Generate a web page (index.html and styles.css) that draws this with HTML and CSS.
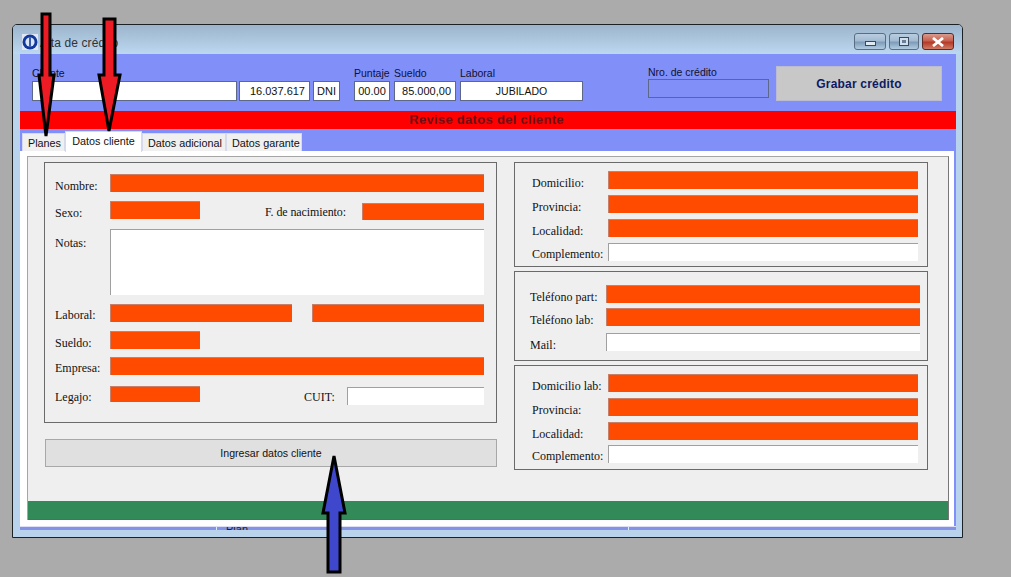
FILE: index.html
```html
<!DOCTYPE html>
<html lang="es">
<head>
<meta charset="utf-8">
<title>Alta de crédito</title>
<link rel="stylesheet" href="styles.css">
</head>
<body>
<div class="window">
  <div class="titlebar">
    <svg class="app-icon" viewBox="0 0 16 16" width="16" height="16">
      <rect width="16" height="16" fill="#dfe8f2"/>
      <circle cx="8" cy="8" r="7.5" fill="#12389e"/>
      <circle cx="8" cy="8" r="4.6" fill="#d9e6f5"/>
      <rect x="7.2" y="3.5" width="1.6" height="9" fill="#12389e"/>
    </svg>
    <span class="title-text">Alta de crédito</span>
    <div class="controls">
      <div class="ctl"><span class="ico-min"></span></div>
      <div class="ctl ctl-max"><span class="ico-max"></span></div>
      <div class="ctl ctl-close">
        <svg viewBox="0 0 14 10" width="14" height="10"><path d="M2 1l10 8M12 1L2 9" stroke="#fff" stroke-width="2.8" fill="none"/></svg>
      </div>
    </div>
  </div>
  <div class="client">
    <div class="head">
      <div class="group"><label class="cap">Cliente</label><div class="box w-cliente"></div></div>
      <div class="group"><div class="box w-dni tr">16.037.617</div></div>
      <div class="group"><div class="box w-tipo tc">DNI</div></div>
      <div class="group g-puntaje"><label class="cap">Puntaje</label><div class="box w-punt tc">00.00</div></div>
      <div class="group"><label class="cap">Sueldo</label><div class="box w-sueldo tr">85.000,00</div></div>
      <div class="group"><label class="cap">Laboral</label><div class="box w-lab tc">JUBILADO</div></div>
      <div class="group g-nro"><label class="cap">Nro. de crédito</label><div class="box box-empty w-nro"></div></div>
      <button class="save">Grabar crédito</button>
    </div>
    <div class="alert">Revise datos del cliente</div>
    <div class="tabs">
      <div class="tab">Planes</div>
      <div class="tab tab-on">Datos cliente</div>
      <div class="tab">Datos adicional</div>
      <div class="tab">Datos garante</div>
    </div>
    <div class="panel">
      <div class="sheet">
        <div class="main">
          <div class="col-left">
            <div class="fs fs-left">
              <div class="row"><span class="lb lb-n">Nombre:</span><div class="f f-grow"></div></div>
              <div class="row"><span class="lb lb-n">Sexo:</span><div class="f f-90"></div><span class="lb lb-nac">F. de nacimiento:</span><div class="f f-nac"></div></div>
              <div class="row"><span class="lb lb-n lb-notas">Notas:</span><div class="in in-notas"></div></div>
              <div class="row"><span class="lb lb-n lb-up">Laboral:</span><div class="f f-182"></div><div class="f f-172"></div></div>
              <div class="row"><span class="lb lb-n">Sueldo:</span><div class="f f-90"></div></div>
              <div class="row"><span class="lb lb-n lb-up">Empresa:</span><div class="f f-grow"></div></div>
              <div class="row"><span class="lb lb-n lb-up">Legajo:</span><div class="f f-90 f-short"></div><span class="lb lb-cuit lb-up">CUIT:</span><div class="in in-cuit"></div></div>
            </div>
            <button class="enter">Ingresar datos cliente</button>
          </div>
          <div class="col-right">
            <div class="fs fs-r fs-r1">
              <div class="row"><span class="lb lb-r">Domicilio:</span><div class="f f-grow"></div></div>
              <div class="row"><span class="lb lb-r">Provincia:</span><div class="f f-grow"></div></div>
              <div class="row"><span class="lb lb-r">Localidad:</span><div class="f f-grow"></div></div>
              <div class="row"><span class="lb lb-r lb-up">Complemento:</span><div class="in in-grow"></div></div>
            </div>
            <div class="fs fs-r fs-r2">
              <div class="row"><span class="lb lb-r">Teléfono part:</span><div class="f f-grow"></div></div>
              <div class="row"><span class="lb lb-r">Teléfono lab:</span><div class="f f-grow"></div></div>
              <div class="row"><span class="lb lb-r">Mail:</span><div class="in in-grow"></div></div>
            </div>
            <div class="fs fs-r fs-r3">
              <div class="row"><span class="lb lb-r">Domicilio lab:</span><div class="f f-grow"></div></div>
              <div class="row"><span class="lb lb-r">Provincia:</span><div class="f f-grow"></div></div>
              <div class="row"><span class="lb lb-r">Localidad:</span><div class="f f-grow"></div></div>
              <div class="row"><span class="lb lb-r lb-up">Complemento:</span><div class="in in-grow"></div></div>
            </div>
          </div>
        </div>
        <div class="greenbar"></div>
      </div>
    </div>
    <div class="strip">
      <div class="cell cell-a"></div>
      <div class="cell cell-b"><span class="cut">Plan</span></div>
      <div class="cell cell-c"></div>
    </div>
  </div>
</div>
<svg class="arrows" width="1011" height="577" viewBox="0 0 1011 577">
  <polygon class="a-red" points="42,14 50,14 50,75 54,75 46,136 39,75 42,75"/>
  <polygon class="a-red" points="104,19 115,19 115,75 120,75 109,131 99,75 104,75"/>
  <polygon class="a-blue" points="334,456 345,513 340,513 340,572 328,572 328,513 323,513"/>
</svg>
</body>
</html>
```

FILE: styles.css
```css
* { box-sizing: border-box; }
html, body { margin: 0; height: 100%; }
body {
  width: 1011px;
  height: 577px;
  overflow: hidden;
  background: #ababab;
  padding: 24px 0 0 12px;
  font-family: "Liberation Sans", Arial, sans-serif;
  position: relative;
}
.window {
  width: 951px;
  height: 514px;
  border: 1px solid #1c2224;
  border-radius: 5px 5px 0 0;
  background: #b9d3ec;
  padding: 0 6px 7px 7px;
  display: flex;
  flex-direction: column;
}
.titlebar {
  height: 29px;
  margin: 0 -6px 0 -7px;
  padding: 9px 8px 0 9px;
  background: linear-gradient(#9cb5cc, #bcd7f0);
  border-radius: 4px 4px 0 0;
  display: flex;
  align-items: flex-start;
}
.app-icon { flex: none; }
.title-text { margin: 2px 0 0 2px; font-size: 12px; line-height: 14px; color: #333; letter-spacing: .1px; }
.controls { margin-left: auto; display: flex; gap: 3px; margin-top: -1px; }
.ctl {
  width: 32px;
  height: 17px;
  border: 1px solid #5b6d80;
  border-radius: 3px;
  background: linear-gradient(#b9cde0 0, #a3bbd2 45%, #7d9cb9 55%, #b2cbe2 100%);
  display: flex;
  align-items: center;
  justify-content: center;
}
.ctl-max { width: 30px; }
.ctl-close {
  border-color: #5c2a22;
  background: linear-gradient(#d99b8f 0, #c8604e 45%, #b33a26 55%, #cf7a66 100%);
}
.ico-min { width: 11px; height: 5px; border: 1px solid #39485a; background: #dfeaf5; margin-top: 3px; }
.ico-max { width: 10px; height: 9px; border: 1px solid #39485a; box-shadow: inset 0 0 0 2px #cfdfee; background: #6a7f96; }
.client {
  height: 476px;
  background: #8090f8;
  display: flex;
  flex-direction: column;
}
.head {
  height: 57px;
  padding: 0 13px 10px 12px;
  display: flex;
  align-items: flex-end;
}
.group { display: flex; flex-direction: column; margin-right: 2px; }
.cap { font-size: 10.5px; line-height: 13px; margin-bottom: 1px; color: #101030; }
.box {
  height: 20px;
  background: #fff;
  border: 1px solid #5d6788;
  font-size: 11px;
  line-height: 19px;
  color: #111;
}
.tr { text-align: right; padding-right: 4px; }
.tc { text-align: center; }
.w-cliente { width: 205px; }
.w-dni { width: 71px; margin-right: 1px; }
.w-tipo { width: 27px; }
.g-puntaje { margin-left: 12px; margin-right: 4px; }
.w-punt { width: 36px; }
.w-sueldo { width: 62px; }
.group:nth-child(5) { margin-right: 4px; }
.w-lab { width: 123px; font-size: 10.5px; }
.g-nro { margin-left: 63px; margin-right: 7px; margin-bottom: 3px; }
.g-nro .cap { margin-bottom: 0; }
.box-empty { background: #8090f8; height: 19px; }
.w-nro { width: 121px; }
.save {
  width: 166px;
  height: 35px;
  padding: 0;
  border: 1px solid #bcbcd0;
  background: #c8c8c8;
  color: #0d1a63;
  font: bold 12px "Liberation Sans", Arial, sans-serif;
  letter-spacing: .2px;
}
.alert {
  height: 18px;
  background: #ff0000;
  color: #6e0f14;
  font-size: 13px;
  font-weight: bold;
  line-height: 18px;
  text-align: center;
  padding-right: 3px;
  letter-spacing: .3px;
}
.tabs {
  height: 22px;
  padding: 0 0 0 2px;
  display: flex;
  align-items: flex-end;
}
.tab {
  height: 18px;
  padding: 0 5px;
  background: #f0f0f0;
  border: 1px solid #d6daea;
  border-bottom: 0;
  font-size: 10.8px;
  line-height: 19px;
  color: #111;
  white-space: nowrap;
}
.tab:nth-child(1) { width: 43px; }
.tab:nth-child(3) { width: 84px; }
.tab:nth-child(4) { width: 76px; }
.tab-on {
  width: 77px;
  height: 21px;
  background: #fff;
  position: relative;
  top: 1px;
  text-align: center;
  padding: 0;
}
.panel {
  height: 375px;
  margin-right: 2px;
  background: #fff;
  padding: 5px 5px 6px 7px;
}
.sheet {
  height: 100%;
  background: #efefef;
  border-top: 1px solid #a5a5a5;
  border-left: 1px solid #a5a5a5;
  border-right: 1px solid #777;
  display: flex;
  flex-direction: column;
}
.main {
  flex: 1;
  display: flex;
  padding: 5px 0 0 16px;
  gap: 17px;
}
.col-left { width: 453px; display: flex; flex-direction: column; }
.col-right { width: 414px; display: flex; flex-direction: column; gap: 4px; }
.fs { border: 1px solid #6a6a6a; display: grid; }
.fs-left {
  height: 261px;
  padding: 11px 12px 0 10px;
  grid-template-rows: 27px 28px 75px 27px 26px 29px 19px;
}
.fs-r { padding-right: 9px; padding-left: 17px; }
.fs-r1 { height: 105px; padding-top: 8px; grid-template-rows: 24px 24px 24px 19px; }
.fs-r2 { height: 90px; padding: 13px 7px 0 15px; grid-template-rows: 23px 25px 19px; }
.fs-r3 { height: 105px; padding-top: 8px; grid-template-rows: 24px 24px 23px 19px; }
.row { display: flex; align-items: flex-start; min-width: 0; }
.lb {
  flex: none;
  font-family: "Liberation Serif", "Times New Roman", serif;
  font-size: 12px;
  line-height: 18px;
  padding-top: 3px;
  color: #111;
  white-space: nowrap;
}
.lb-up { padding-top: 2px; }
.lb-n { width: 55px; }
.lb-notas { padding-top: 5px; }
.lb-r { width: 76px; }
.lb-nac { width: 97px; margin-left: 65px; padding-top: 2px; letter-spacing: -.1px; }
.lb-cuit { width: 43px; margin-left: 104px; }
.f {
  height: 18px;
  background: #ff4b00;
  border-top: 1px solid #c88068;
  border-left: 1px solid #c88068;
}
.f-grow { flex: 1; }
.f-90 { width: 90px; }
.f-nac { width: 122px; height: 17px; margin-top: 2px; }
.f-182 { width: 182px; margin-right: 20px; }
.f-172 { width: 172px; }
.f-short { height: 16px; }
.in {
  background: #fff;
  border-top: 1px solid #a0a0a0;
  border-left: 1px solid #a0a0a0;
  height: 18px;
}
.in-grow { flex: 1; }
.in-notas { flex: 1; height: 66px; }
.in-cuit { width: 137px; margin-top: 1px; }
.enter {
  width: 452px;
  height: 28px;
  margin: 16px 0 0 1px;
  padding: 0;
  border: 1px solid #a8a8a8;
  background: #e0e0e0;
  color: #111;
  font: 10.6px "Liberation Sans", Arial, sans-serif;
}
.greenbar { height: 19px; background: #318a58; border-bottom: 1px solid #4f6f5c; }
.strip {
  flex: 1;
  display: flex;
  background: #8493e6;
  border-top: 1px solid #dcdff5;
  overflow: hidden;
}
.cell { height: 4px; overflow: hidden; }
.cell-a { width: 196px; }
.cell-b { width: 413px; border-left: 1px solid #dfe6f5; border-right: 1px solid #dfe6f5; padding-left: 9px; }
.cell-c { flex: 1; }
.cut { display: block; font-size: 11px; line-height: 4px; color: #222; height: 4px; }
.arrows { position: absolute; left: 0; top: 0; pointer-events: none; }
.a-red { fill: #ed1c24; stroke: #000; stroke-width: 3; stroke-linejoin: miter; }
.a-blue { fill: #3f48cc; stroke: #000; stroke-width: 3; stroke-linejoin: miter; }
```
